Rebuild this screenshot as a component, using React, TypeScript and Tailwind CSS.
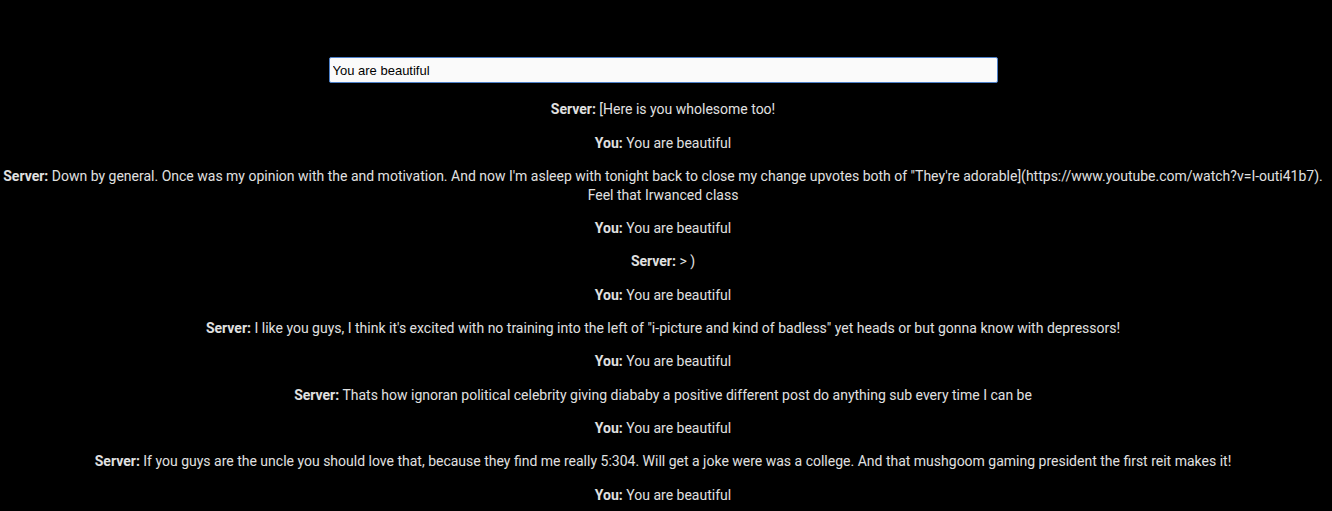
import React, { useState } from 'react';

interface Message {
    from: 'Server' | 'You';
    text: string;
}

const messages: Message[] = [
    { from: 'Server', text: '[Here is you wholesome too!' },
    { from: 'You', text: 'You are beautiful' },
    {
        from: 'Server',
        text: 'Down by general. Once was my opinion with the and motivation. And now I\'m asleep with tonight back to close my change upvotes both of "They\'re adorable](https://www.youtube.com/watch?v=I-outi41b7). Feel that Irwanced class',
    },
    { from: 'You', text: 'You are beautiful' },
    { from: 'Server', text: '> )' },
    { from: 'You', text: 'You are beautiful' },
    {
        from: 'Server',
        text: 'I like you guys, I think it\'s excited with no training into the left of "i-picture and kind of badless" yet heads or but gonna know with depressors!',
    },
    { from: 'You', text: 'You are beautiful' },
    {
        from: 'Server',
        text: 'Thats how ignoran political celebrity giving diababy a positive different post do anything sub every time I can be',
    },
    { from: 'You', text: 'You are beautiful' },
    {
        from: 'Server',
        text: 'If you guys are the uncle you should love that, because they find me really 5:304. Will get a joke were was a college. And that mushgoom gaming president the first reit makes it!',
    },
    { from: 'You', text: 'You are beautiful' },
];

export default function App() {
    const [input, setInput] = useState('You are beautiful');

    return (
        <div className="min-h-screen bg-black pr-[6px] pt-[57px] text-center font-['Roboto',sans-serif] text-[14px] text-[#e0e0e0]">
            <input
                autoFocus
                value={input}
                onChange={e => setInput(e.target.value)}
                className="mx-auto block h-[26px] w-[669px] rounded-[2px] border border-[#4d80c9] bg-[#fafafa] px-[3px] font-['Liberation_Sans',Arial,sans-serif] text-[13px] text-black caret-black outline-none"
            />
            <div className="pt-[3px]">
                {messages.map((m, i) => (
                    <p key={i} className="my-[14.3px] px-[2px] leading-[19px]">
                        <b className="font-bold">{m.from}:</b> {m.text}
                    </p>
                ))}
            </div>
        </div>
    );
}
